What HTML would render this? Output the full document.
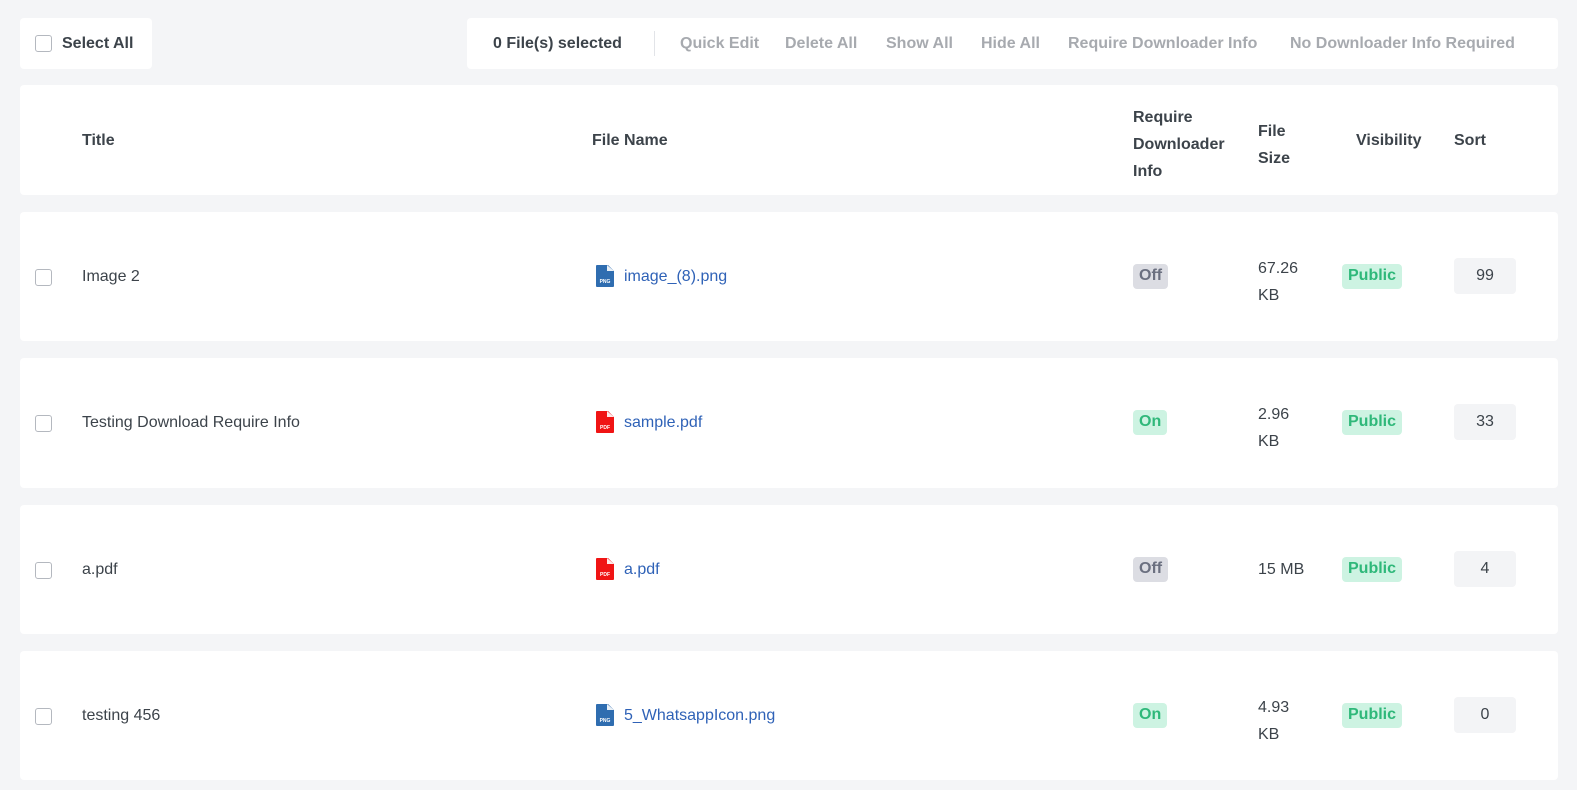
<!DOCTYPE html>
<html><head><style>
body{margin:0;background:#f4f5f7;font-family:"Liberation Sans",sans-serif;font-size:16px;color:#3c434a;width:1577px;height:790px;position:relative;overflow:hidden}
.card{position:absolute;background:#fff;border-radius:4px}
.cb{position:absolute;left:35px;width:15px;height:15px;border:1.5px solid #b4b8bf;border-radius:3px;background:#fff}
.a{position:absolute;white-space:nowrap}
.b{font-weight:bold}
.link{color:#2f62b7}
.tag{position:absolute;padding:3px 6px 4px;border-radius:4px;font-size:16px;font-weight:bold}
.off{background:#dcdde3;color:#6b7080}
.on{background:#cdf3e2;color:#2fb87a}
.pub{background:#cdf3e2;color:#2fb87a}
.sort{position:absolute;left:1454px;width:62px;height:36px;background:#f3f4f6;border-radius:4px;text-align:center;line-height:36px}
.ico{position:absolute;left:596px;width:18px;height:22px}
</style></head><body>
<div class="card" style="left:20px;top:18px;width:132px;height:51px"></div>
<div class="cb" style="top:35px"></div>
<div class="a b" style="left:62px;top:35px">Select All</div>
<div class="card" style="left:467px;top:18px;width:1091px;height:51px"></div>
<div class="a b" style="left:493px;top:35px">0 File(s) selected</div>
<div style="position:absolute;left:654px;top:31px;width:1px;height:25px;background:#e2e4e8"></div>
<div class="a b" style="left:680px;top:35px;color:#a7aaaf">Quick Edit</div>
<div class="a b" style="left:785px;top:35px;color:#a7aaaf">Delete All</div>
<div class="a b" style="left:886px;top:35px;color:#a7aaaf">Show All</div>
<div class="a b" style="left:981px;top:35px;color:#a7aaaf">Hide All</div>
<div class="a b" style="left:1068px;top:35px;color:#a7aaaf">Require Downloader Info</div>
<div class="a b" style="left:1290px;top:35px;color:#a7aaaf">No Downloader Info Required</div>

<div class="card" style="left:20px;top:85px;width:1538px;height:110px"></div>
<div class="a b" style="left:82px;top:132px">Title</div>
<div class="a b" style="left:592px;top:132px">File Name</div>
<div class="a b" style="left:1133px;top:104px;line-height:27px">Require<br>Downloader<br>Info</div>
<div class="a b" style="left:1258px;top:118px;line-height:27px">File<br>Size</div>
<div class="a b" style="left:1356px;top:132px">Visibility</div>
<div class="a b" style="left:1454px;top:132px">Sort</div>

<div class="card" style="left:20px;top:212px;width:1538px;height:129px"></div>
<div class="card" style="left:20px;top:358px;width:1538px;height:130px"></div>
<div class="card" style="left:20px;top:505px;width:1538px;height:129px"></div>
<div class="card" style="left:20px;top:651px;width:1538px;height:129px"></div>

<div class="cb" style="top:269px"></div>
<div class="a" style="left:82px;top:268px">Image 2</div>
<svg class="ico" style="top:265px" viewBox="0 0 18 22"><path d="M0 1a1 1 0 0 1 1-1h11l6 6v15a1 1 0 0 1-1 1H1a1 1 0 0 1-1-1z" fill="#2f6db0"/><path d="M11 0v6h7" fill="#fff" opacity=".9"/><text x="9" y="18" font-size="5" fill="#fff" text-anchor="middle" font-family="Liberation Sans" font-weight="bold">PNG</text></svg>
<div class="a link" style="left:624px;top:268px">image_(8).png</div>
<div class="tag off" style="left:1133px;top:264px">Off</div>
<div class="a" style="left:1258px;top:255px;line-height:27px">67.26<br>KB</div>
<div class="tag pub" style="left:1342px;top:264px">Public</div>
<div class="sort" style="top:258px">99</div>

<div class="cb" style="top:415px"></div>
<div class="a" style="left:82px;top:414px">Testing Download Require Info</div>
<svg class="ico" style="top:411px" viewBox="0 0 18 22"><path d="M0 1a1 1 0 0 1 1-1h11l6 6v15a1 1 0 0 1-1 1H1a1 1 0 0 1-1-1z" fill="#f01414"/><path d="M11 0v6h7" fill="#fff" opacity=".9"/><text x="9" y="18" font-size="5" fill="#fff" text-anchor="middle" font-family="Liberation Sans" font-weight="bold">PDF</text></svg>
<div class="a link" style="left:624px;top:414px">sample.pdf</div>
<div class="tag on" style="left:1133px;top:410px">On</div>
<div class="a" style="left:1258px;top:401px;line-height:27px">2.96<br>KB</div>
<div class="tag pub" style="left:1342px;top:410px">Public</div>
<div class="sort" style="top:404px">33</div>

<div class="cb" style="top:562px"></div>
<div class="a" style="left:82px;top:561px">a.pdf</div>
<svg class="ico" style="top:558px" viewBox="0 0 18 22"><path d="M0 1a1 1 0 0 1 1-1h11l6 6v15a1 1 0 0 1-1 1H1a1 1 0 0 1-1-1z" fill="#f01414"/><path d="M11 0v6h7" fill="#fff" opacity=".9"/><text x="9" y="18" font-size="5" fill="#fff" text-anchor="middle" font-family="Liberation Sans" font-weight="bold">PDF</text></svg>
<div class="a link" style="left:624px;top:561px">a.pdf</div>
<div class="tag off" style="left:1133px;top:557px">Off</div>
<div class="a" style="left:1258px;top:561px">15 MB</div>
<div class="tag pub" style="left:1342px;top:557px">Public</div>
<div class="sort" style="top:551px">4</div>

<div class="cb" style="top:708px"></div>
<div class="a" style="left:82px;top:707px">testing 456</div>
<svg class="ico" style="top:704px" viewBox="0 0 18 22"><path d="M0 1a1 1 0 0 1 1-1h11l6 6v15a1 1 0 0 1-1 1H1a1 1 0 0 1-1-1z" fill="#2f6db0"/><path d="M11 0v6h7" fill="#fff" opacity=".9"/><text x="9" y="18" font-size="5" fill="#fff" text-anchor="middle" font-family="Liberation Sans" font-weight="bold">PNG</text></svg>
<div class="a link" style="left:624px;top:707px">5_WhatsappIcon.png</div>
<div class="tag on" style="left:1133px;top:703px">On</div>
<div class="a" style="left:1258px;top:694px;line-height:27px">4.93<br>KB</div>
<div class="tag pub" style="left:1342px;top:703px">Public</div>
<div class="sort" style="top:697px">0</div>
</body></html>
